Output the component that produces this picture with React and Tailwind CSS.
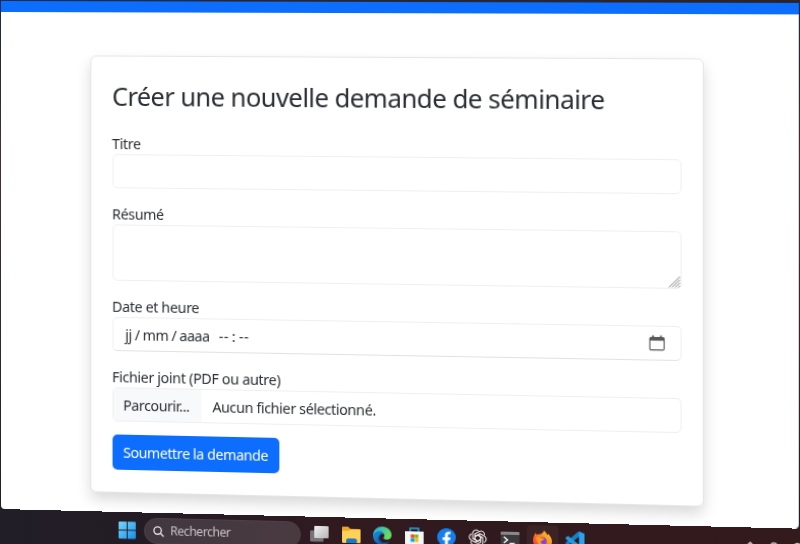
import React from 'react';

const fieldBorder = 'rounded-[5px] border border-[#efeff1] bg-white';

function Field({ label, className, children }) {
  return (
    <div className={className}>
      <label className="block h-[21px] whitespace-nowrap text-[14px] leading-[22px] tracking-[-0.3px]">{label}</label>
      {children}
    </div>
  );
}

function CalendarIcon() {
  return (
    <svg width="16" height="16" viewBox="0 0 16 16" fill="none" stroke="#5a5a5d">
      <rect x="1" y="2.6" width="13.500" height="12" rx="1.2" strokeWidth="1.1" />
      <path d="M1 4.3h13.500" strokeWidth="2.6" />
      <path d="M4 .5v3M11.500 .5v3" strokeWidth="1.6" />
    </svg>
  );
}

function RequestCard() {
  return (
    <main className="h-[434.500px] w-[593px] rounded-[6px] border border-[#e6e6e8] bg-white px-[20.500px] pt-[23.500px] text-[#2b2f34] shadow-[0_7px_14px_rgba(0,0,0,0.15)]">
      <h1 className="h-[30px] whitespace-nowrap text-[25px] leading-[30px] tracking-[-0.54px]">Créer une nouvelle demande de séminaire</h1>
      <Field label="Titre" className="mt-[22.500px]">
        <div className={`h-[34px] ${fieldBorder}`} />
      </Field>
      <Field label="Résumé" className="mt-[15px]">
        <div className={`flex h-[56px] items-end justify-end ${fieldBorder}`}>
          <svg width="12" height="12" viewBox="0 0 12 12" stroke="#858588" strokeWidth="1">
            <path d="M1 11.500 11.500 1M4 11.500 11.500 4M7 11.500 11.500 7M10 11.500l1.500-1.500" />
          </svg>
        </div>
      </Field>
      <Field label="Date et heure" className="mt-[15px]">
        <div className={`flex h-[34px] items-center justify-between pl-[12px] pr-[14px] ${fieldBorder} border-b-[#e2e2e4]`}>
          <span className="flex whitespace-pre pt-px text-[14px] leading-none tracking-[-0.4px]">
            <span>jj</span><span className="mx-[3px]">/</span><span>mm</span><span className="mx-[3px]">/</span><span>aaaa</span>
            <span className="ml-[9px] tracking-[0.4px]">--</span><span className="ml-[3px] mr-[3.500px]">:</span><span className="tracking-[0.4px]">--</span>
          </span>
          <CalendarIcon />
        </div>
      </Field>
      <Field label="Fichier joint (PDF ou autre)" className="mt-[15px]">
        <div className={`flex h-[34px] overflow-hidden text-[14px] leading-[33px] tracking-[-0.37px] ${fieldBorder}`}>
          <span className="w-[87px] bg-[#f8f9fa] pl-[10px]">Parcourir...</span>
          <span className="pl-[11px]">Aucun fichier sélectionné.</span>
        </div>
      </Field>
      <div className="mt-[13px] flex h-[34.500px] w-[164.500px] items-center justify-center whitespace-nowrap rounded-[5px] bg-[#0d6efd] pt-px text-[14px] tracking-[-0.4px] text-white">Soumettre la demande</div>
    </main>
  );
}

function StartIcon() {
  return (
    <svg width="17" height="18" viewBox="0 0 17 18">
      <defs><linearGradient id="win" x2="1" y2="1"><stop stopColor="#78d8fb" /><stop offset="1" stopColor="#168ee8" /></linearGradient></defs>
      <path fill="url(#win)" d="M0 1.5Q0 .5 1 .5h7v8H0zM9 .5h7q1 0 1 1v7H9zM0 9.500h8v8H1q-1 0-1-1zM9 9.500h8v7q0 1-1 1H9z" />
    </svg>
  );
}

function TaskViewIcon() {
  return (
    <svg width="18" height="18" viewBox="0 0 18 18">
      <defs><linearGradient id="tv" x2="1" y2="1"><stop stopColor="#f2f2f2" /><stop offset="1" stopColor="#b5b5b5" /></linearGradient></defs>
      <rect x="0" y="5.500" width="13" height="11" rx="1" fill="#77747a" />
      <rect x="4" y="1" width="14" height="12" rx="1" fill="url(#tv)" />
    </svg>
  );
}

function FolderIcon() {
  return (
    <svg width="18" height="18" viewBox="0 0 18 18">
      <path fill="#e9a825" d="M0 2q0-1 1-1h5l2 2h9q1 0 1 1v5H0z" />
      <path fill="#ffd257" d="M0 6q0-1 1-1h5l2-1h9q1 0 1 1v11q0 1-1 1H1q-1 0-1-1z" />
      <path fill="#1878ca" d="M4 17v-2.500q0-2 2-2h6.500q2 0 2 2V17z" />
    </svg>
  );
}

function EdgeIcon() {
  return (
    <svg width="18" height="18" viewBox="0 0 24 24">
      <defs>
        <linearGradient id="eg" x2="1" y2=".5"><stop stopColor="#25a9e8" /><stop offset="1" stopColor="#67df5a" /></linearGradient>
        <linearGradient id="eb" x2="1" y2="1"><stop stopColor="#168ddf" /><stop offset="1" stopColor="#0b55a8" /></linearGradient>
      </defs>
      <path fill="url(#eg)" d="M0 11C1 4 6 0 12 0c7 0 12 5 12 11 0 4-3 6-6 6-4 0-5-2-4-3 2-3 0-6-4-6-5 0-9 2-10 6z" />
      <path fill="url(#eb)" d="M0 12c1-4 5-6 9-6 3 0 5 2 5 4-4-1-6 2-6 5 0 4 4 7 8 6 3 0 5-1 6-2-2 3-6 5-10 5C5 24 0 19 0 12z" />
      <path fill="#0a4f9a" d="M9 11c-5 5-1 12 6 12-5-2-8-6-6-12z" />
    </svg>
  );
}

function StoreIcon() {
  return (
    <svg width="18" height="18" viewBox="0 0 18 18">
      <path fill="none" stroke="#25a7e5" strokeWidth="1.5" d="M5 4V1h8v3" />
      <path fill="#f4f5f6" d="M0 4h18v12q0 2-2 2H2q-2 0-2-2z" />
      <path fill="#f25022" d="M5.500 7H9v3.500H5.500z" />
      <path fill="#7fba00" d="M9.300 7h3.500v3.500H9.300z" />
      <path fill="#00a4ef" d="M5.500 10.800H9v3.500H5.500z" />
      <path fill="#ffb900" d="M9.300 10.800h3.500v3.500H9.300z" />
    </svg>
  );
}

function FacebookIcon() {
  return (
    <svg width="18" height="18" viewBox="0 0 24 24">
      <circle cx="12" cy="12" r="12" fill="#1580ed" />
      <path fill="#fff" d="M10 24v-8.500H7V12h3V9.400C10 6.300 11.800 4.600 14.600 4.600c1.300 0 2.600.2 2.600.2v3h-1.500c-1.500 0-1.900.9-1.900 1.900V12h3.300l-.5 3.500h-2.800V24z" />
    </svg>
  );
}

function KnotIcon() {
  const turns = [0, 60, 120, 180, 240, 300];
  return (
    <svg width="18" height="18" viewBox="0 0 24 24" fill="none" stroke="#e5dfe0" strokeWidth="1.500">
      {turns.map((turn) => (
        <path key={turn} transform={`rotate(${turn} 12 12)`} d="M8.500 14V6.500l5.500-3.200a4.500 4.500 0 0 1 6.700 4.500M8.500 10l3.500-2 6.500 3.700" />
      ))}
    </svg>
  );
}

function TerminalIcon() {
  return (
    <svg width="18" height="18" viewBox="0 0 18 18">
      <rect y="2" width="18" height="16" rx="1" fill="#3c3a3d" />
      <path fill="#8a878a" d="M0 3q0-1 1-1h16q1 0 1 1v2H0z" />
      <path fill="none" stroke="#f3f3f3" strokeWidth="1.500" d="m3 7 3.500 3L3 13M8.500 13.500h5" />
    </svg>
  );
}

function FirefoxIcon() {
  return (
    <svg width="18" height="18" viewBox="0 0 24 24">
      <defs><linearGradient id="ff" x1="1" x2="0" y2="1"><stop stopColor="#ffe236" /><stop offset=".45" stopColor="#ff8a16" /><stop offset="1" stopColor="#f32656" /></linearGradient></defs>
      <path fill="url(#ff)" d="M1 8c0-2 2-4 3-5v3c1-1 3-1 4-1 2 0 5-2 6-5 2 2 3 3 4 6l1-2c3 3 5 6 5 10 0 6-5 10-12 10S0 20 0 13c0-2 0-3 1-5z" />
      <circle cx="12" cy="14" r="5.200" fill="#8242dc" />
      <path fill="#ff9d21" d="M4 9c3-1 5 0 7 1 2 0 3 0 3 1s-3 2-4 3c-1 2 1 4 4 3-3 4-9 2-10-8z" />
    </svg>
  );
}

function CodeIcon() {
  return (
    <svg width="18" height="18" viewBox="0 0 24 24">
      <path fill="#1b7fc6" d="m17 0 7 3v18l-7 3L7 14.500 3 18l-3-1.500V15L14 2z" />
      <path fill="#2aa4ee" d="m17 0 7 3v18l-7 3z" />
      <path fill="#229be2" d="M0 8.500 3 6l14 11v7L0 10z" />
      <path fill="#331a1d" d="M17 7v10l-6.500-5z" />
    </svg>
  );
}

function Taskbar() {
  return (
    <footer className="flex h-[44px] items-start bg-[linear-gradient(90deg,#211e28_0%,#241c25_18%,#301a20_42%,#331a1c_100%)] pl-[117.500px]">
      <div className="mt-[9px] shrink-0"><StartIcon /></div>
      <div className="ml-[8.500px] mt-[5.500px] flex h-[26px] w-[154px] shrink-0 items-center rounded-full border border-[#4c4147] bg-[linear-gradient(90deg,#41383f,#493a40)] pl-[8px] text-[12px] tracking-[-0.45px] text-[#c9c2c6]">
        <svg width="11" height="11" viewBox="0 0 12 12" fill="none" stroke="#e0dce0" strokeWidth="1.500"><circle cx="5" cy="5" r="4" /><path d="m8 8 3.500 3.500" /></svg>
        <span className="ml-[6px]">Rechercher</span>
      </div>
      <div className="ml-[9px] mt-[8.500px] flex shrink-0 gap-[12.700px]">
        <TaskViewIcon />
        <FolderIcon />
        <EdgeIcon />
        <StoreIcon />
        <FacebookIcon />
        <KnotIcon />
        <TerminalIcon />
        <div className="-mx-[6px] -mt-[5px] h-[36px] rounded-[4px] bg-[#3b2326] px-[6px] pt-[5px]"><FirefoxIcon /></div>
        <CodeIcon />
      </div>
      <div className="ml-[152px] mt-[13.500px] flex shrink-0 items-start gap-[13px]">
        <svg width="9" height="7" fill="none" stroke="#d6cccc" strokeWidth="1.300"><path d="m1 5 3.500-3.500L8 5" /></svg>
        <svg width="9" height="7" fill="none" stroke="#d6cccc" strokeWidth="1.300"><circle cx="4.500" cy="4.500" r="3" /></svg>
        <svg width="9" height="7" fill="none" stroke="#d6cccc" strokeWidth="1.300"><circle cx="4.500" cy="4.500" r="3" /></svg>
      </div>
    </footer>
  );
}

export default function App() {
  return (
    <div className="h-[544px] w-[800px] overflow-hidden bg-[#302326] font-['Noto_Sans','Open_Sans',sans-serif]">
      <div className="h-[553px] w-[780px] origin-top-left overflow-hidden bg-[linear-gradient(180deg,#1d2c4a_0%,#25252d_10%,#302326_35%,#211e28_100%)] [transform:matrix3d(1,0.0025,0,-0.0000435,0,1,0,0,0,0,1,0,0,0,0,1)]">
        <div className="bg-[linear-gradient(90deg,#211e28_0%,#301a20_42%,#331a1c_100%)]">
          <div className="h-[508.500px] bg-[linear-gradient(180deg,#1d2c4a_0%,#262933_12%,#453030_30%,#211e28_100%)] pl-px">
            <div className="h-px w-full" />
            <div className="flex h-[507.500px] w-[770.500px] flex-col overflow-hidden rounded-b-[4px] bg-white">
              <div className="h-[11px] shrink-0 bg-[#0d6efd]" />
              <div className="ml-[89px] mt-[43px]">
                <RequestCard />
              </div>
            </div>
          </div>
          <Taskbar />
        </div>
      </div>
    </div>
  );
}
